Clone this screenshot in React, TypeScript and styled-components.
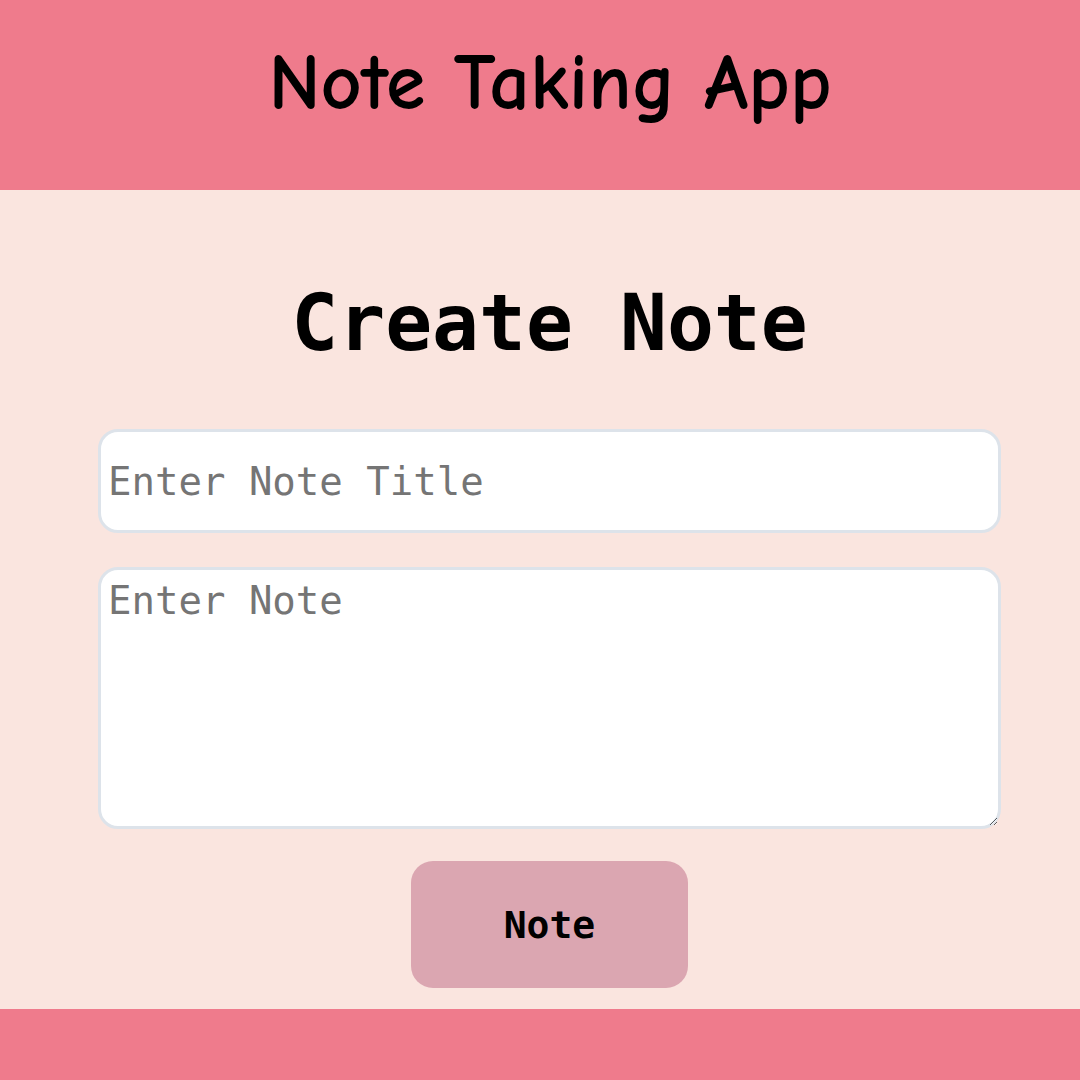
import { useState } from "react";
import styled, { createGlobalStyle } from "styled-components";

const GlobalStyle = createGlobalStyle`
  html, body {
    margin: 0;
    padding: 0;
    background: #fae5df;
  }
  * {
    box-sizing: border-box;
  }
`;

const MONO = `Consolas, "DejaVu Sans Mono", "Liberation Mono", monospace`;

const App = () => {
  const [title, setTitle] = useState("");
  const [body, setBody] = useState("");

  return (
    <Page>
      <GlobalStyle />
      <Header>
        <AppTitle>Note Taking App</AppTitle>
      </Header>
      <Main>
        <Heading>Create Note</Heading>
        <Form onSubmit={(e) => e.preventDefault()}>
          <TitleInput
            type="text"
            placeholder="Enter Note Title"
            value={title}
            onChange={(e) => setTitle(e.target.value)}
          />
          <BodyInput
            placeholder="Enter Note"
            value={body}
            onChange={(e) => setBody(e.target.value)}
          />
          <SubmitButton type="submit">Note</SubmitButton>
        </Form>
      </Main>
      <Footer />
    </Page>
  );
};

const Page = styled.div`
  display: flex;
  flex-direction: column;
  min-height: 1080px;
  background: #fae5df;
`;

const Header = styled.header`
  height: 190px;
  display: flex;
  align-items: center;
  justify-content: center;
  padding-left: 20px;
  padding-bottom: 25px;
  background: #ef7b8c;
`;

const AppTitle = styled.h1`
  margin: 0;
  font-family: "Comic Sans MS", "Comic Neue", "Noto Sans", sans-serif;
  font-weight: 700;
  font-size: 80px;
  line-height: 1;
  color: #000;
`;

const Main = styled.main`
  flex: 1;
  display: flex;
  flex-direction: column;
  align-items: center;
  padding: 88px 79px 21px 98px;
`;

const Heading = styled.h2`
  margin: 0 0 60px;
  font-family: ${MONO};
  font-weight: 700;
  font-size: 78px;
  line-height: 91px;
  color: #000;
`;

const Form = styled.form`
  width: 100%;
  display: flex;
  flex-direction: column;
  align-items: center;
`;

const fieldStyles = `
  width: 100%;
  border: 3px solid #dde3ea;
  border-radius: 20px;
  background: #fff;
  font-family: ${MONO};
  font-size: 39px;
  color: #000;
  outline: none;
  &::placeholder {
    color: #757575;
  }
`;

const TitleInput = styled.input`
  ${fieldStyles}
  height: 104px;
  padding: 0 7px;
`;

const BodyInput = styled.textarea`
  ${fieldStyles}
  height: 262px;
  margin-top: 34px;
  padding: 8px 7px;
  resize: vertical;
`;

const SubmitButton = styled.button`
  margin-top: 32px;
  width: 277px;
  height: 127px;
  border: none;
  border-radius: 22px;
  background: #dba6b1;
  font-family: ${MONO};
  font-weight: 700;
  font-size: 38px;
  color: #000;
  cursor: pointer;
`;

const Footer = styled.footer`
  height: 71px;
  background: #ef7b8c;
`;

export default App;
